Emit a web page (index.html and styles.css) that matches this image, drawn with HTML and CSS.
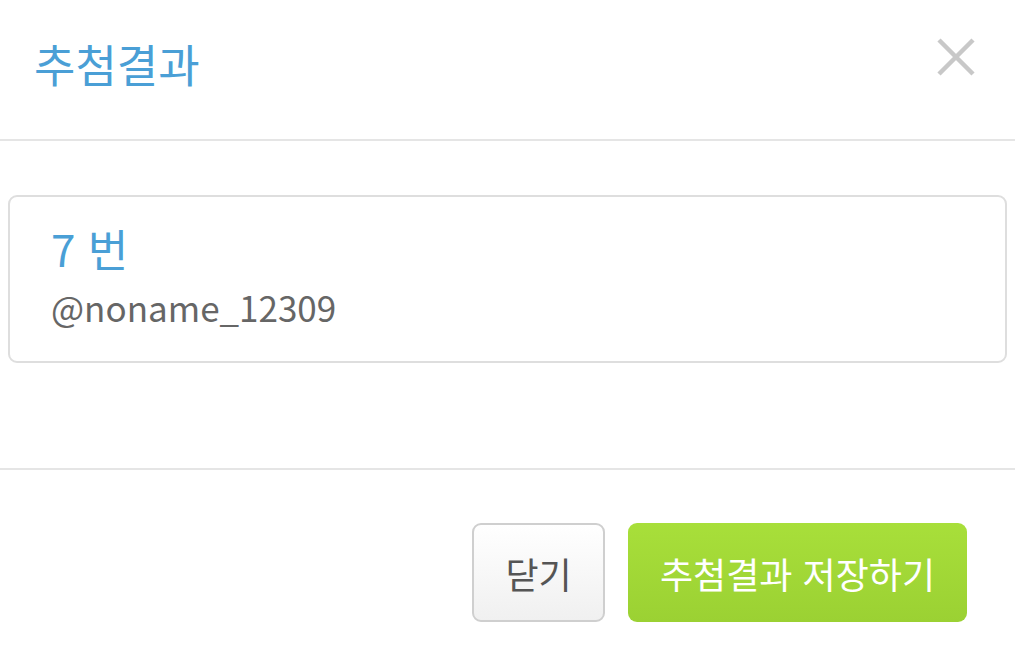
FILE: index.html
```html
<!DOCTYPE html>
<html lang="ko">
<head>
<meta charset="utf-8">
<link rel="stylesheet" href="styles.css">
</head>
<body>
<div class="modal">
  <header class="modal-header">
    <h1 class="modal-title">추첨결과</h1>
    <button class="close-btn" aria-label="닫기">
      <svg width="38" height="38" viewBox="0 0 38 38"><path d="M2 2 L36 36 M36 2 L2 36" stroke="#c8c8c8" stroke-width="4.5" fill="none"/></svg>
    </button>
  </header>
  <section class="modal-body">
    <div class="result-card">
      <div class="result-number">7 번</div>
      <div class="result-name">@noname_12309</div>
    </div>
  </section>
  <footer class="modal-footer">
    <button class="btn btn-default">닫기</button>
    <button class="btn btn-primary">추첨결과 저장하기</button>
  </footer>
</div>
</body>
</html>
```
FILE: styles.css
```css
* { box-sizing: border-box; }
html, body { margin: 0; padding: 0; background: #fff; }
body {
  font-family: "Noto Sans CJK KR", "Noto Sans", sans-serif;
  width: 1015px;
  height: 665px;
  overflow: hidden;
}
.modal { display: flex; flex-direction: column; }
.modal-header {
  height: 141px;
  border-bottom: 2px solid #e5e5e5;
  display: flex;
  align-items: center;
  justify-content: space-between;
  padding: 0 40px 26px 34px;
}
.modal-title {
  margin: 14px 0 0 0;
  font-size: 45px;
  font-weight: 400;
  color: #4a9fd6;
  line-height: 1;
}
.close-btn {
  border: 0;
  background: none;
  padding: 0;
  width: 38px;
  height: 38px;
  display: flex;
}
.modal-body {
  height: 329px;
  padding: 54px 8px 0 8px;
  border-bottom: 2px solid #e5e5e5;
}
.result-card {
  height: 168px;
  border: 2px solid #dedede;
  border-radius: 9px;
  padding: 21px 40px 0 41px;
}
.result-number {
  font-size: 44px;
  color: #4a9fd6;
  line-height: 60px;
}
.result-name {
  font-size: 35px;
  color: #666;
  line-height: 50px;
  margin-top: 4px;
}
.modal-footer {
  display: flex;
  justify-content: flex-end;
  gap: 23px;
  padding: 53px 48px 0 0;
}
.btn {
  font-family: "Noto Sans CJK KR", "Noto Sans", sans-serif;
  font-size: 36px;
  height: 99px;
  border-radius: 9px;
  line-height: 1;
}
.btn-default {
  width: 133px;
  border: 2px solid #cfcfcf;
  background: linear-gradient(#ffffff, #f0f0f0);
  color: #555;
}
.btn-primary {
  width: 339px;
  border: 0;
  background: linear-gradient(#a8df3a, #9bd133);
  color: #fff;
}
```
